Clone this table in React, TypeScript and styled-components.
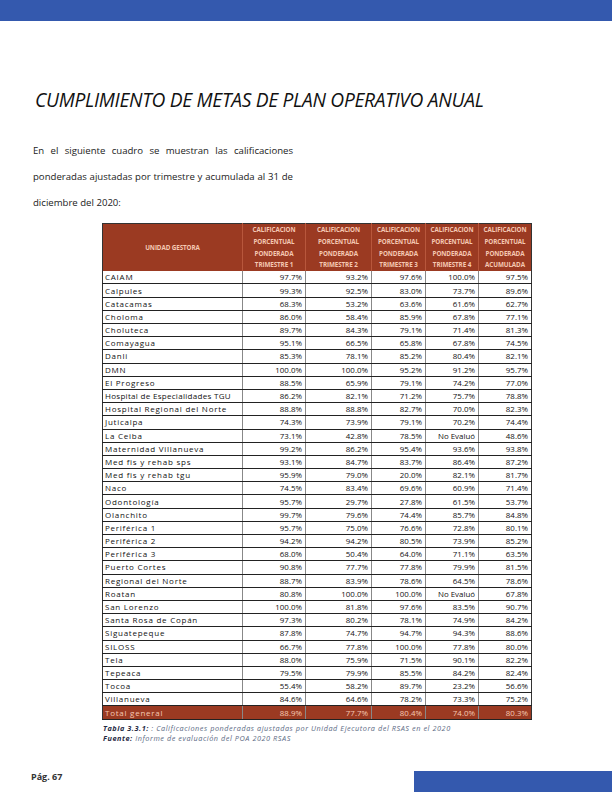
import React from "react";
import styled, { createGlobalStyle } from "styled-components";

const Global = createGlobalStyle`
  html, body { margin: 0; padding: 0; background: #fff; }
  body { font-family: "Liberation Sans", Arial, sans-serif; }
`;

const Page = styled.div`
  width: 612px;
  height: 792px;
  display: flex;
  flex-direction: column;
  background: #fff;
  overflow: hidden;
`;

const TopBar = styled.div`
  height: 21px;
  background: #3459ae;
  flex-shrink: 0;
`;

const Title = styled.h1`
  margin: 67px 0 0 35px;
  font-family: "Open Sans", "Liberation Sans", sans-serif;
  font-style: italic;
  font-weight: 400;
  font-size: 19.2px;
  line-height: 24px;
  color: #111;
  letter-spacing: -0.3px;
  white-space: nowrap;
`;

const Paragraph = styled.p`
  margin: 26px 0 0 33px;
  width: 260px;
  font-family: "Open Sans", "Liberation Sans", sans-serif;
  font-size: 9.6px;
  line-height: 25.8px;
  color: #222;
  text-align: justify;
`;

const Table = styled.table`
  margin: 8px 0 0 102px;
  width: 424px;
  border-collapse: collapse;
  table-layout: fixed;
  font-family: "Open Sans", "Liberation Sans", sans-serif;
  border: 1px solid #333;
`;

const HeadCell = styled.th<{ $w: number }>`
  width: ${(p) => p.$w}px;
  background: #9b3a22;
  color: #f5c8b3;
  font-size: 6.3px;
  font-weight: 700;
  line-height: 11.6px;
  height: 46px;
  padding: 0;
  text-align: center;
  vertical-align: middle;
  border-right: 1px solid #b8573c;
  letter-spacing: -0.1px;
  white-space: nowrap;
  &:last-child { border-right: none; }
`;

const Row = styled.tr<{ $total?: boolean }>`
  height: 13.2px;
  background: ${(p) => (p.$total ? "#9b3a22" : "#fff")};
  color: ${(p) => (p.$total ? "#f5c8b3" : "#111")};
`;

const NameCell = styled.td<{ $tight?: boolean }>`
  font-size: 8px;
  line-height: 12px;
  padding: 0 0 0 2px;
  white-space: nowrap;
  overflow: hidden;
  letter-spacing: ${(p) => (p.$tight ? "0.3px" : "0.75px")};
  border-bottom: 1px solid #222;
  border-right: 1px solid #888;
`;

const ValCell = styled.td`
  font-size: 7.9px;
  line-height: 12px;
  padding: 0 3px 0 0;
  text-align: right;
  white-space: nowrap;
  border-bottom: 1px solid #222;
  border-right: 1px solid #888;
  &:last-child { border-right: none; }
`;

const Caption = styled.div`
  margin: 3px 0 0 103px;
  font-family: "Open Sans", "Liberation Sans", sans-serif;
  font-style: italic;
  font-size: 7.3px;
  line-height: 10px;
  letter-spacing: 0.55px;
  color: #5d6b85;
  white-space: nowrap;
  b { color: #1f2a44; font-weight: 700; }
`;

const Footer = styled.div`
  margin-top: auto;
  display: flex;
  align-items: flex-end;
  justify-content: space-between;
  height: 21px;
`;

const PageNum = styled.span`
  margin: 0 0 10px 31px;
  font-family: "Open Sans", "Liberation Sans", sans-serif;
  font-weight: 700;
  font-size: 9px;
  line-height: 10px;
  color: #333;
`;

const BottomBar = styled.div`
  width: 198px;
  height: 21px;
  background: #3459ae;
`;

const widths = [139, 62, 65, 53, 52, 52];

const rows: [string, string, string, string, string, string][] = [
  ["CAIAM", "97.7%", "93.2%", "97.6%", "100.0%", "97.5%"],
  ["Calpules", "99.3%", "92.5%", "83.0%", "73.7%", "89.6%"],
  ["Catacamas", "68.3%", "53.2%", "63.6%", "61.6%", "62.7%"],
  ["Choloma", "86.0%", "58.4%", "85.9%", "67.8%", "77.1%"],
  ["Choluteca", "89.7%", "84.3%", "79.1%", "71.4%", "81.3%"],
  ["Comayagua", "95.1%", "66.5%", "65.8%", "67.8%", "74.5%"],
  ["Danli", "85.3%", "78.1%", "85.2%", "80.4%", "82.1%"],
  ["DMN", "100.0%", "100.0%", "95.2%", "91.2%", "95.7%"],
  ["El Progreso", "88.5%", "65.9%", "79.1%", "74.2%", "77.0%"],
  ["Hospital de Especialidades TGU", "86.2%", "82.1%", "71.2%", "75.7%", "78.8%"],
  ["Hospital Regional del Norte", "88.8%", "88.8%", "82.7%", "70.0%", "82.3%"],
  ["Juticalpa", "74.3%", "73.9%", "79.1%", "70.2%", "74.4%"],
  ["La Ceiba", "73.1%", "42.8%", "78.5%", "No Evaluó", "48.6%"],
  ["Maternidad Villanueva", "99.2%", "86.2%", "95.4%", "93.6%", "93.8%"],
  ["Med fis y rehab sps", "93.1%", "84.7%", "83.7%", "86.4%", "87.2%"],
  ["Med fis y rehab tgu", "95.9%", "79.0%", "20.0%", "82.1%", "81.7%"],
  ["Naco", "74.5%", "83.4%", "69.6%", "60.9%", "71.4%"],
  ["Odontología", "95.7%", "29.7%", "27.8%", "61.5%", "53.7%"],
  ["Olanchito", "99.7%", "79.6%", "74.4%", "85.7%", "84.8%"],
  ["Periférica 1", "95.7%", "75.0%", "76.6%", "72.8%", "80.1%"],
  ["Periférica 2", "94.2%", "94.2%", "80.5%", "73.9%", "85.2%"],
  ["Periférica 3", "68.0%", "50.4%", "64.0%", "71.1%", "63.5%"],
  ["Puerto Cortes", "90.8%", "77.7%", "77.8%", "79.9%", "81.5%"],
  ["Regional del Norte", "88.7%", "83.9%", "78.6%", "64.5%", "78.6%"],
  ["Roatan", "80.8%", "100.0%", "100.0%", "No Evaluó", "67.8%"],
  ["San Lorenzo", "100.0%", "81.8%", "97.6%", "83.5%", "90.7%"],
  ["Santa Rosa de Copán", "97.3%", "80.2%", "78.1%", "74.9%", "84.2%"],
  ["Siguatepeque", "87.8%", "74.7%", "94.7%", "94.3%", "88.6%"],
  ["SILOSS", "66.7%", "77.8%", "100.0%", "77.8%", "80.0%"],
  ["Tela", "88.0%", "75.9%", "71.5%", "90.1%", "82.2%"],
  ["Tepeaca", "79.5%", "79.9%", "85.5%", "84.2%", "82.4%"],
  ["Tocoa", "55.4%", "58.2%", "89.7%", "23.2%", "56.6%"],
  ["Villanueva", "84.6%", "64.6%", "78.2%", "73.3%", "75.2%"],
];

const total = ["Total general", "88.9%", "77.7%", "80.4%", "74.0%", "80.3%"];

const lastLines = ["TRIMESTRE 1", "TRIMESTRE 2", "TRIMESTRE 3", "TRIMESTRE 4", "ACUMULADA"];

export default function App() {
  return (
    <Page>
      <Global />
      <TopBar />
      <Title>CUMPLIMIENTO DE METAS DE PLAN OPERATIVO ANUAL</Title>
      <Paragraph>
        En el siguiente cuadro se muestran las calificaciones ponderadas ajustadas por trimestre y
        acumulada al 31 de diciembre del 2020:
      </Paragraph>
      <Table>
        <thead>
          <tr>
            <HeadCell $w={widths[0]}>UNIDAD GESTORA</HeadCell>
            {lastLines.map((l, i) => (
              <HeadCell key={l} $w={widths[i + 1]}>
                CALIFICACION
                <br />
                PORCENTUAL
                <br />
                PONDERADA
                <br />
                {l}
              </HeadCell>
            ))}
          </tr>
        </thead>
        <tbody>
          {rows.map((r) => (
            <Row key={r[0]}>
              <NameCell $tight={r[0].length > 28}>{r[0]}</NameCell>
              {r.slice(1).map((v, i) => (
                <ValCell key={i}>{v}</ValCell>
              ))}
            </Row>
          ))}
          <Row $total>
            <NameCell>{total[0]}</NameCell>
            {total.slice(1).map((v, i) => (
              <ValCell key={i}>{v}</ValCell>
            ))}
          </Row>
        </tbody>
      </Table>
      <Caption>
        <div>
          <b>Tabla 3.3.1:</b> : Calificaciones ponderadas ajustadas por Unidad Ejecutora del RSAS en el 2020
        </div>
        <div>
          <b>Fuente:</b> Informe de evaluación del POA 2020 RSAS
        </div>
      </Caption>
      <Footer>
        <PageNum>Pág. 67</PageNum>
        <BottomBar />
      </Footer>
    </Page>
  );
}
